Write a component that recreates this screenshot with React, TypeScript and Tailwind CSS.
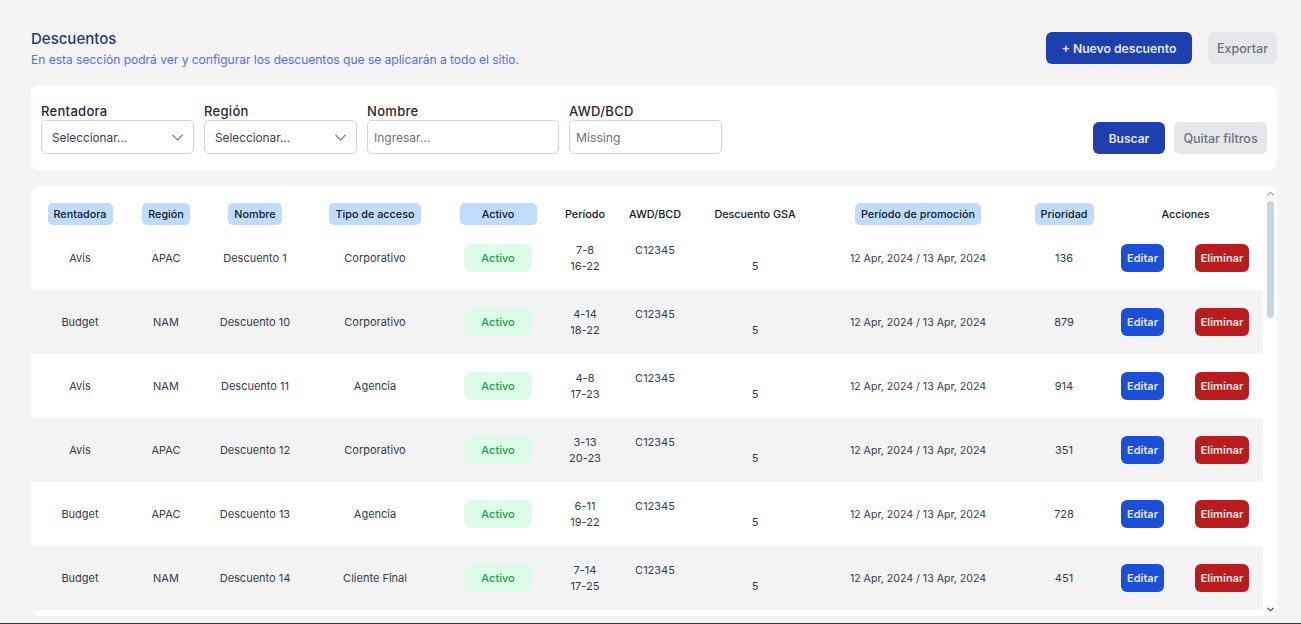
import { ChevronDown, ChevronUp } from "lucide-react";

type Row = {
  rentadora: string;
  region: string;
  nombre: string;
  acceso: string;
  periodo: [string, string];
  prioridad: number;
};

const rows: Row[] = [
  { rentadora: "Avis", region: "APAC", nombre: "Descuento 1", acceso: "Corporativo", periodo: ["7-8", "16-22"], prioridad: 136 },
  { rentadora: "Budget", region: "NAM", nombre: "Descuento 10", acceso: "Corporativo", periodo: ["4-14", "18-22"], prioridad: 879 },
  { rentadora: "Avis", region: "NAM", nombre: "Descuento 11", acceso: "Agencia", periodo: ["4-8", "17-23"], prioridad: 914 },
  { rentadora: "Avis", region: "APAC", nombre: "Descuento 12", acceso: "Corporativo", periodo: ["3-13", "20-23"], prioridad: 351 },
  { rentadora: "Budget", region: "APAC", nombre: "Descuento 13", acceso: "Agencia", periodo: ["6-11", "19-22"], prioridad: 728 },
  { rentadora: "Budget", region: "NAM", nombre: "Descuento 14", acceso: "Cliente Final", periodo: ["7-14", "17-25"], prioridad: 451 },
];

function HeaderPill({ children, wide }: { children: string; wide?: boolean }) {
  return (
    <span className={`inline-block h-[22px] rounded-[5px] bg-[#bfdbfe] px-[6px] text-center text-[10.8px] font-medium leading-[23px] text-[#111827] ${wide ? "w-[77px]" : ""}`}>
      {children}
    </span>
  );
}

function SelectBox() {
  return (
    <div className="flex h-[34px] w-[153px] items-center justify-between rounded-[5px] border border-[#d1d5db] bg-white pl-[10px] pr-[6px] text-[11.8px] text-[#374151]">
      <span className="pt-[3px]">Seleccionar...</span>
      <ChevronDown size={19} strokeWidth={1.5} className="text-[#6b7280]" />
    </div>
  );
}

function Field({ label, children }: { label: string; children: React.ReactNode }) {
  return (
    <div className="flex flex-col">
      <label className="h-[19px] text-[13px] font-medium leading-[21px] tracking-[0.3px] text-[#1f2937]">{label}</label>
      {children}
    </div>
  );
}

export default function App() {
  return (
    <div className="h-[624px] overflow-hidden border-b border-[#3a3a3a] bg-[#f4f4f4] pl-[31px] pr-[24px] pt-[32px] font-['Inter','Noto_Sans',sans-serif]">
      {/* Header */}
      <div className="flex items-start justify-between">
        <div>
          <h1 className="text-[15px] font-medium leading-[14px] text-[#1e3a8a]">Descuentos</h1>
          <p className="mt-[6px] text-[12px] leading-[16px] text-[#4f6ef7]">
            En esta sección podrá ver y configurar los descuentos que se aplicarán a todo el sitio.
          </p>
        </div>
        <div className="flex gap-4">
          <button className="h-8 w-[146px] rounded-md bg-[#1e40af] pt-[2px] text-[12.2px] font-semibold text-[#e5e7eb]">+ Nuevo descuento</button>
          <button className="h-8 w-[69px] rounded-md bg-[#e5e7eb] pt-[2px] text-[12.5px] font-medium text-[#6b7280]">Exportar</button>
        </div>
      </div>

      {/* Filtros */}
      <div className="mt-[17px] flex h-[85px] items-end justify-between rounded-lg bg-white pb-4 pl-[10px] pr-[10px]">
        <div className="flex gap-[10px]">
          <Field label="Rentadora"><SelectBox /></Field>
          <Field label="Región"><SelectBox /></Field>
          <Field label="Nombre">
            <input placeholder="Ingresar..." className="h-[34px] w-[192px] rounded-[5px] border border-[#d1d5db] px-[6px] text-[12px] placeholder:text-[#6b7280]" />
          </Field>
          <Field label="AWD/BCD">
            <input placeholder="Missing" className="h-[34px] w-[153px] rounded-[5px] border border-[#d1d5db] px-[6px] text-[12.2px] placeholder:text-[#6b7280]" />
          </Field>
        </div>
        <div className="flex gap-[9px]">
          <button className="h-8 w-[72px] rounded-md bg-[#1e40af] pt-[1px] text-[12px] font-semibold text-[#e5e7eb]">Buscar</button>
          <button className="h-8 w-[93px] rounded-md bg-[#e5e7eb] pt-[2px] text-[12.5px] font-medium text-[#6b7280]">Quitar filtros</button>
        </div>
      </div>

      {/* Tabla */}
      <div className="mt-4 flex h-[430px] rounded-lg bg-white">
        <div className="w-[1231px] pt-[17px]">
          <table className="w-full table-fixed border-collapse text-center text-[11px] text-[#333c4d]">
            <colgroup>
              <col className="w-[98px]" />
              <col className="w-[74px]" />
              <col className="w-[104px]" />
              <col className="w-[136px]" />
              <col className="w-[110px]" />
              <col className="w-[64px]" />
              <col className="w-[76px]" />
              <col className="w-[124px]" />
              <col className="w-[202px]" />
              <col className="w-[90px]" />
              <col className="w-[153px]" />
            </colgroup>
            <thead>
              <tr className="h-[23px] align-top text-[#111827]">
                <th className="font-medium"><HeaderPill>Rentadora</HeaderPill></th>
                <th className="font-medium"><HeaderPill>Región</HeaderPill></th>
                <th className="font-medium"><HeaderPill>Nombre</HeaderPill></th>
                <th className="font-medium"><HeaderPill>Tipo de acceso</HeaderPill></th>
                <th className="font-medium"><HeaderPill wide>Activo</HeaderPill></th>
                <th className="text-[10.8px] font-medium leading-[23px]">Período</th>
                <th className="text-[10.8px] font-medium leading-[23px]">AWD/BCD</th>
                <th className="text-[10.8px] font-medium leading-[23px]">Descuento GSA</th>
                <th className="font-medium"><HeaderPill>Período de promoción</HeaderPill></th>
                <th className="font-medium"><HeaderPill>Prioridad</HeaderPill></th>
                <th className="text-[10.8px] font-medium leading-[23px]">Acciones</th>
              </tr>
            </thead>
            <tbody>
              {rows.map((r, i) => (
                <tr key={r.nombre} className={`h-16 ${i % 2 === 1 ? "bg-[#f3f3f3]" : ""}`}>
                  <td>{r.rentadora}</td>
                  <td>{r.region}</td>
                  <td>{r.nombre}</td>
                  <td>{r.acceso}</td>
                  <td>
                    <span className="inline-block h-7 w-[68px] rounded-lg bg-[#dcfce7] text-[11px] font-medium leading-7 text-[#16a34a]">Activo</span>
                  </td>
                  <td className="leading-4">{r.periodo[0]}<br />{r.periodo[1]}</td>
                  <td className="leading-4">C12345<br />&nbsp;</td>
                  <td className="leading-4 text-[#1e3a5f]">&nbsp;<br />5</td>
                  <td className="pt-[1px] text-[10.6px]">12 Apr, 2024 / 13 Apr, 2024</td>
                  <td>{r.prioridad}</td>
                  <td>
                    <div className="flex items-center pl-3">
                      <button className="h-7 w-[43px] rounded-md bg-[#1d4ed8] text-[11px] font-semibold text-[#e5e7eb]">Editar</button>
                      <button className="ml-[31px] h-7 w-[54px] rounded-md bg-[#b91c1c] text-[11px] font-semibold text-[#e5e7eb]">Eliminar</button>
                    </div>
                  </td>
                </tr>
              ))}
            </tbody>
          </table>
        </div>
        {/* Barra de scroll */}
        <div className="flex flex-1 flex-col items-center pt-[1px] pl-[2px] text-[#6b7280]">
          <ChevronUp size={11} strokeWidth={3} className="mt-[1px] text-[#a3a3a3]" />
          <div className="mt-[2px] h-[117px] w-[7px] rounded-full bg-[#cbd5e1]" />
          <ChevronDown size={11} strokeWidth={3} className="mt-auto mb-[1px] text-[#4b5563]" />
        </div>
      </div>
    </div>
  );
}
